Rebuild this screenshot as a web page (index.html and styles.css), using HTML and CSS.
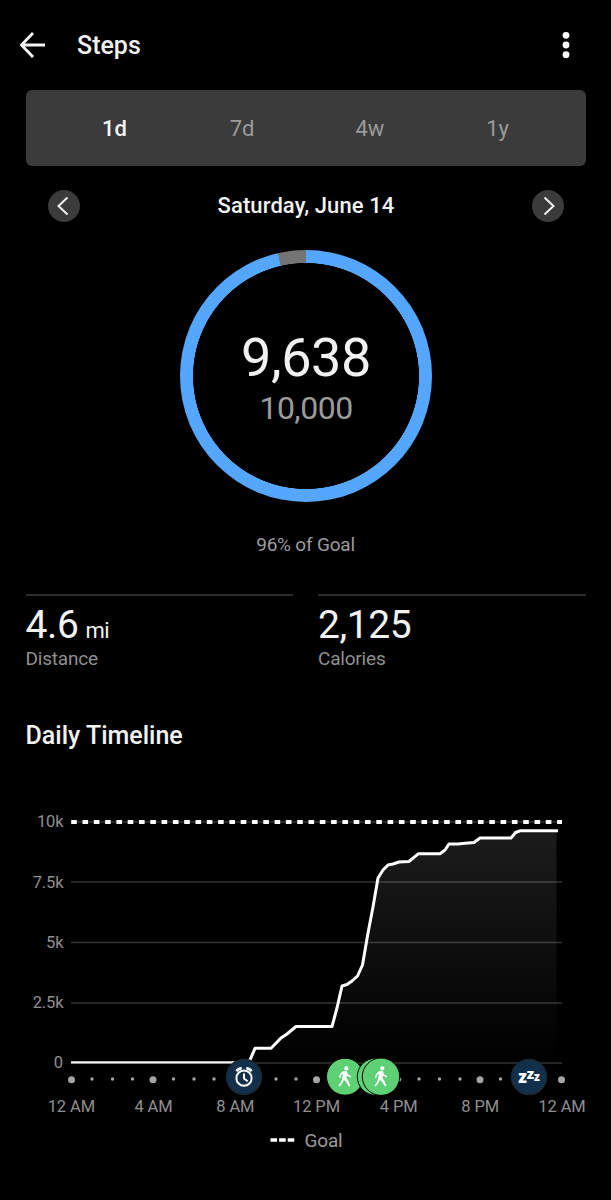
FILE: index.html
```html
<!DOCTYPE html>
<html lang="en">
<head>
    <meta charset="utf-8">
    <title>Steps</title>
    <link rel="stylesheet" href="styles.css">
</head>
<body>
    <header class="topbar">
        <svg class="back" width="28" height="28" viewBox="0 0 28 28">
            <path d="M27 14H4M15 2L3.5 14l11.500 12"/>
        </svg>
        <h1>Steps</h1>
        <svg class="more" width="8" height="28" viewBox="0 0 8 28">
            <circle cx="4" cy="4.3" r="3.4"/>
            <circle cx="4" cy="14" r="3.4"/>
            <circle cx="4" cy="23.7" r="3.4"/>
        </svg>
    </header>

    <nav class="tabs">
        <span class="tab active">1d</span>
        <span class="tab">7d</span>
        <span class="tab">4w</span>
        <span class="tab">1y</span>
    </nav>

    <div class="date-row">
        <button class="arrow">
            <svg width="32" height="32" viewBox="0 0 32 32"><path d="M19.5 7.5L10.5 16l9 8.5"/></svg>
        </button>
        <span class="date">Saturday, June 14</span>
        <button class="arrow">
            <svg width="32" height="32" viewBox="0 0 32 32"><path d="M12.5 7.5l9 8.5-9 8.5"/></svg>
        </button>
    </div>

    <div class="ring">
        <div class="steps">9,638</div>
        <div class="target">10,000</div>
    </div>
    <p class="percent">96% of Goal</p>

    <div class="stats">
        <div class="stat">
            <div class="value"><span>4.6</span><span class="unit">mi</span></div>
            <div class="label">Distance</div>
        </div>
        <div class="stat">
            <div class="value">2,125</div>
            <div class="label">Calories</div>
        </div>
    </div>

    <h2>Daily Timeline</h2>

    <svg class="chart" width="611" height="380" viewBox="0 780 611 380">
        <defs>
            <linearGradient id="fill" x1="0" y1="0" x2="0" y2="1">
                <stop offset="0" stop-color="#1c1c1c"/>
                <stop offset="1" stop-color="#000"/>
            </linearGradient>
            <g id="walk">
                <circle cx="1.300" cy="-7.600" r="2.100"/>
                <path d="M-1.700-5L1.600-4.900L3.200-1.500L6.400.2L5.800 1.500L1.900-.2L1.500 2L3.400 5L5.300 9.800L3.900 10.500L1.200 5.900L-1.200 3.700L-2.200 6.500L-5.200 10.500L-6.600 9.500L-4 6L-2.900 2.700L-2.200-2.500L-3.900-1.100L-4.600 1.900L-6 1.500L-5.100-2.100Z"/>
            </g>
        </defs>

        <path class="area" d="M71 1062H249L255 1048H271L281 1038L287 1034L296 1026H332L337 1008L342 986L347 984.500L352 981L357.500 976L362.500 965L368 933L373 907L378 878L383 870L388 865L393 864L399 862H409L418.500 853.500H440L445 850L449 844H458L474 842.500L480 838H511L515.500 832.500L520 831H556.500V1062Z"/>
        <g class="grid">
            <path d="M71 822H562"/>
            <path d="M71 882H562"/>
            <path d="M71 942.500H562"/>
            <path d="M71 1003H562"/>
            <path d="M71 1063H562"/>
        </g>
        <path class="goal" d="M71.200 822H562"/>
        <path class="base" d="M71 1062.300H240"/>
        <path class="line" d="M244 1062.300H249L255 1048.300H271L281 1038L287 1034L296 1026.500H332L337 1008L342 986L347 984.500L352 981L357.500 976L362.500 965L368 933L373 907L378 878L383 870L388 865L393 864L399 862L409 861.500L418.500 853.700H440L445 850L449 844H458L465 843.200L474 842.500L480 838H511L515.500 832.500L520 830.800H558"/>

        <g class="ylabels">
            <text x="63.500" y="827">10k</text>
            <text x="63.500" y="887.500">7.5k</text>
            <text x="63.500" y="947.500">5k</text>
            <text x="63.500" y="1008">2.5k</text>
            <text x="63" y="1068">0</text>
        </g>

        <g class="hours">
            <circle cx="92" cy="1079" r="1.700"/>
            <circle cx="112.500" cy="1079" r="1.700"/>
            <circle cx="132.500" cy="1079" r="1.700"/>
            <circle cx="173.500" cy="1079" r="1.700"/>
            <circle cx="194" cy="1079" r="1.700"/>
            <circle cx="214" cy="1079" r="1.700"/>
            <circle cx="276" cy="1079" r="1.700"/>
            <circle cx="296" cy="1079" r="1.700"/>
            <circle cx="399" cy="1079.500" r="2.200"/>
            <circle cx="419" cy="1079" r="1.700"/>
            <circle cx="439.500" cy="1079" r="1.700"/>
            <circle cx="460" cy="1079" r="1.700"/>
            <circle cx="500.500" cy="1079" r="1.700"/>
            <circle cx="71.500" cy="1079.700" r="3.500"/>
            <circle cx="153" cy="1079.700" r="3.500"/>
            <circle cx="316.500" cy="1079.700" r="3.500"/>
            <circle cx="480" cy="1079.700" r="3.500"/>
            <circle cx="561.500" cy="1079.700" r="3.500"/>
        </g>

        <!-- wake up -->
        <g transform="translate(244 1077)">
            <circle class="night" r="17.500"/>
            <g class="clock">
                <circle cy="1.200" r="7.600"/>
                <path d="M0-3.500V1.600L3.700 4.200"/>
                <path class="bells" d="M-7.400-5.700Q-5.600-8.700-2.300-8.600M7.400-5.700Q5.600-8.700 2.300-8.600"/>
            </g>
        </g>
        <!-- walks -->
        <g class="activity">
            <circle cx="345" cy="1076.700" r="18.500"/>
            <use href="#walk" x="345" y="1076"/>
            <circle cx="376" cy="1076.700" r="18.700"/>
            <circle cx="381" cy="1076.700" r="18.700"/>
            <use href="#walk" x="381" y="1076"/>
        </g>
        <!-- sleep -->
        <g transform="translate(529 1077)">
            <circle class="night" r="17.500"/>
            <text class="zzz" x="-10.700" y="5.500" font-size="17">z</text>
            <text class="zzz" x="-2.200" y="1.500" font-size="14.500">z</text>
            <text class="zzz" x="5" y="3.800" font-size="11.500">z</text>
        </g>

        <g class="xlabels">
            <text x="71.300" y="1111.500">12 AM</text>
            <text x="153.500" y="1111.500">4 AM</text>
            <text x="235.300" y="1111.500">8 AM</text>
            <text x="316.500" y="1111.500">12 PM</text>
            <text x="398.700" y="1111.500">4 PM</text>
            <text x="480.200" y="1111.500">8 PM</text>
            <text x="562" y="1111.500">12 AM</text>
        </g>

        <path class="legend-line" d="M270.500 1140H295"/>
        <text class="legend" x="304.500" y="1147">Goal</text>
    </svg>
</body>
</html>
```

FILE: styles.css
```css
* {
    box-sizing: border-box;
}
body {
    margin: 0;
    width: 611px;
    height: 1200px;
    overflow: hidden;
    background: #000;
    color: #f2f2f2;
    font-family: Roboto, "Liberation Sans", sans-serif;
}
h1, h2, p {
    margin: 0;
    font-weight: 500;
}
.topbar {
    display: flex;
    align-items: center;
    height: 90px;
    padding: 0 41px 0 18px;
}
.topbar h1 {
    flex: 1;
    padding-left: 31px;
    font-size: 25px;
}
.back path {
    fill: none;
    stroke: #f5f5f5;
    stroke-width: 2.8;
}
.more {
    fill: #fff;
}
.tabs {
    display: flex;
    justify-content: space-around;
    align-items: center;
    height: 76px;
    margin: 0 25.5px;
    padding: 0 24px 0 25px;
    background: #3b3b3b;
    border-radius: 6px;
}
.tab {
    width: 128px;
    text-align: center;
    font-size: 22px;
    color: #9b9b9b;
}
.tab.active {
    color: #f5f5f5;
    font-weight: 500;
}
.date-row {
    display: flex;
    justify-content: space-between;
    align-items: center;
    height: 79px;
    padding: 0 47px 0 48px;
}
.date {
    font-size: 22px;
    font-weight: 500;
    letter-spacing: .1px;
}
.arrow {
    width: 32px;
    height: 32px;
    padding: 0;
    border: 0;
    border-radius: 50%;
    background: #3b3b3b;
}
.arrow svg {
    display: block;
    fill: none;
    stroke: #f0f0f0;
    stroke-width: 2;
}
.ring {
    width: 252px;
    height: 252px;
    margin: 5px auto 0 180px;
    padding-top: 76px;
    text-align: center;
    border-radius: 50%;
    background:
        radial-gradient(circle, #000 112.7px, transparent 113.3px),
        conic-gradient(#54a6ff 0 96.4%, #747474 96.4% 100%);
}
.steps {
    font-size: 54px;
    line-height: 64px;
    letter-spacing: -.4px;
}
.target {
    font-size: 32px;
    line-height: 36px;
    letter-spacing: -.5px;
    color: #9b9b9b;
}
.percent {
    margin-top: 31px;
    text-align: center;
    font-size: 19px;
    font-weight: 400;
    line-height: 24px;
    letter-spacing: -.2px;
    color: #9b9b9b;
}
.stats {
    display: grid;
    grid-template-columns: 1fr 1fr;
    gap: 25px;
    margin: 37px 25.5px 0;
}
.stat {
    border-top: 2px solid #2c2c2c;
}
.value {
    display: flex;
    align-items: baseline;
    gap: 7px;
    height: 51px;
    font-size: 39px;
    line-height: 58px;
    letter-spacing: -.4px;
}
.unit {
    font-size: 22px;
    line-height: 26px;
}
.label {
    font-size: 19px;
    line-height: 23px;
    letter-spacing: -.2px;
    color: #8f8f8f;
}
h2 {
    margin: 51px 25.5px 0;
    font-size: 25px;
    line-height: 30px;
}
.chart {
    display: block;
    margin-top: 29px;
}
.area {
    fill: url(#fill);
}
.grid {
    stroke: #fff;
    stroke-opacity: .2;
    stroke-width: 1.6;
}
.goal {
    stroke: #fff;
    stroke-width: 4;
    stroke-dasharray: 5.6 5.7;
}
.base {
    stroke: #f5f5f5;
    stroke-width: 2.2;
}
.line {
    fill: none;
    stroke: #fff;
    stroke-width: 3;
    stroke-linejoin: round;
}
.ylabels, .xlabels {
    font-size: 16.5px;
    letter-spacing: -.1px;
    fill: #8f8f8f;
}
.ylabels {
    text-anchor: end;
}
.xlabels {
    text-anchor: middle;
}
.hours {
    fill: #a5a5a5;
}
.night {
    fill: #12304c;
    stroke: #1c2730;
    stroke-width: 1.5;
}
.clock {
    fill: none;
    stroke: #fff;
    stroke-width: 2;
}
.clock .bells {
    stroke-width: 2.8;
}
.activity circle {
    fill: #5dd174;
    stroke: #000;
    stroke-width: 1;
}
#walk, #walk circle {
    fill: #fff;
    stroke: none;
}
.zzz {
    fill: #fff;
    font-family: "Open Sans", sans-serif;
    font-weight: 800;
}
.legend {
    font-size: 19px;
    letter-spacing: -.2px;
    fill: #9b9b9b;
}
.legend-line {
    stroke: #fff;
    stroke-width: 3.5;
    stroke-dasharray: 6.6 2;
}
```
